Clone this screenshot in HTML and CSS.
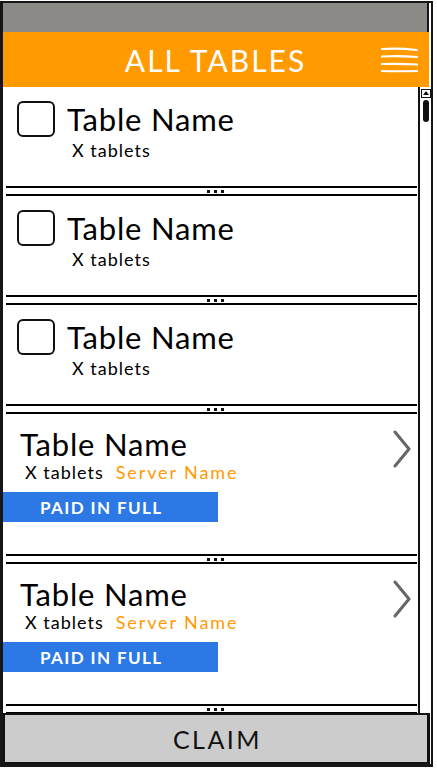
FILE: index.html
```html
<!DOCTYPE html>
<html lang="en">
<head>
    <meta charset="UTF-8">
    <meta name="viewport" content="width=device-width, initial-scale=1.0">
    <title>All Tables</title>
    <link rel="stylesheet" href="styles.css">
</head>
<body>
    <div class="phone">
        <div class="status-bar"></div>
        <div class="app-bar">
            <span></span>
            <h1 class="app-title">ALL TABLES</h1>
            <svg class="menu-icon" width="37" height="26" viewBox="0 0 37 26">
                <path d="M1 2 Q18 1 36 3" />
                <path d="M1 9.5 Q18 8.5 36 10" />
                <path d="M1 17 Q18 16.5 36 17.5" />
                <path d="M1 24 Q18 24.5 36 24" />
            </svg>
        </div>
        <div class="content">
            <div class="table-list">
                <div class="row">
                    <div class="checkbox"></div>
                    <div class="row-text">
                        <div class="table-name">Table Name</div>
                        <div class="meta"><span class="tablets">X tablets</span></div>
                    </div>
                </div>
                <div class="divider"><i></i><i></i><i></i></div>
                <div class="row">
                    <div class="checkbox"></div>
                    <div class="row-text">
                        <div class="table-name">Table Name</div>
                        <div class="meta"><span class="tablets">X tablets</span></div>
                    </div>
                </div>
                <div class="divider"><i></i><i></i><i></i></div>
                <div class="row">
                    <div class="checkbox"></div>
                    <div class="row-text">
                        <div class="table-name">Table Name</div>
                        <div class="meta"><span class="tablets">X tablets</span></div>
                    </div>
                </div>
                <div class="divider"><i></i><i></i><i></i></div>
                <div class="row row-paid">
                    <div class="row-main">
                        <div class="row-text">
                            <div class="table-name">Table Name</div>
                            <div class="meta"><span class="tablets">X tablets</span><span class="server">Server Name</span></div>
                        </div>
                        <svg class="chevron" width="20" height="38" viewBox="0 0 20 38">
                            <path d="M3 2 L17 19 L3 36" />
                        </svg>
                    </div>
                    <div class="paid-badge">PAID IN FULL</div>
                </div>
                <div class="divider"><i></i><i></i><i></i></div>
                <div class="row row-paid">
                    <div class="row-main">
                        <div class="row-text">
                            <div class="table-name">Table Name</div>
                            <div class="meta"><span class="tablets">X tablets</span><span class="server">Server Name</span></div>
                        </div>
                        <svg class="chevron" width="20" height="38" viewBox="0 0 20 38">
                            <path d="M3 2 L17 19 L3 36" />
                        </svg>
                    </div>
                    <div class="paid-badge">PAID IN FULL</div>
                </div>
                <div class="divider"><i></i><i></i><i></i></div>
            </div>
            <div class="scrollbar">
                <div class="scroll-up"></div>
                <div class="scroll-thumb"></div>
            </div>
        </div>
        <button class="claim-btn">CLAIM</button>
    </div>
</body>
</html>
```

FILE: styles.css
```css
body {
    margin: 0;
    background-color: #fff;
    font-family: Lato, "Open Sans", sans-serif;
}
.phone {
    margin-top: 1px;
    width: 433px;
    height: 766px;
    box-sizing: border-box;
    border: 3px solid #161616;
    border-top-width: 2px;
    border-right-width: 2px;
    display: flex;
    flex-direction: column;
    overflow: hidden;
}
.status-bar {
    height: 29px;
    flex: none;
    background-color: #8b8a87;
    margin-right: 2px;
    border-right: 2px solid #161616;
}
.app-bar {
    height: 55px;
    flex: none;
    margin: 0 0 0 -3px;
    background-color: #ff9a00;
    display: grid;
    grid-template-columns: 1fr auto 1fr;
    align-items: center;
    border-right: 2px solid #fff;
}
.app-title {
    margin: 0;
    color: #fff;
    font-size: 30px;
    font-weight: normal;
    letter-spacing: 2px;
    padding-left: 2px;
}
.menu-icon {
    justify-self: end;
    margin-right: 11px;
}
.menu-icon path {
    fill: none;
    stroke: #fff;
    stroke-width: 2.2;
    stroke-linecap: round;
}
.content {
    flex: 1;
    display: flex;
    min-height: 0;
}
.table-list {
    flex: 1;
    overflow: hidden;
}
.row {
    height: 99px;
    display: flex;
    align-items: flex-start;
    box-sizing: border-box;
    padding: 14px 0 0 14px;
}
.checkbox {
    width: 38px;
    height: 36px;
    box-sizing: border-box;
    border: 2px solid #111;
    border-radius: 6px;
    flex: none;
}
.row-text {
    margin-left: 12px;
}
.table-name {
    font-size: 31px;
    line-height: 30px;
    margin-top: 3px;
    color: #000;
    letter-spacing: 0.8px;
}
.meta {
    margin-top: 6px;
    padding-left: 5px;
    font-size: 18px;
    line-height: 20px;
    color: #000;
    letter-spacing: 1px;
}
.server {
    color: #ff9a00;
    margin-left: 12px;
    letter-spacing: 1.9px;
}
.row-paid {
    height: 140px;
    flex-direction: column;
    padding: 15px 0 0 0;
}
.row-main {
    display: flex;
    justify-content: space-between;
    align-self: stretch;
}
.row-paid .row-text {
    margin-left: 17px;
}
.row-paid .table-name {
    margin-top: 0;
}
.row-paid .meta {
    margin-top: 3px;
}
.chevron {
    margin: 1px 6px 0 0;
}
.chevron path {
    fill: none;
    stroke: #666;
    stroke-width: 3;
    stroke-linecap: round;
    stroke-linejoin: round;
}
.paid-badge {
    margin: 10px 0 0 -1px;
    width: 216px;
    height: 30px;
    box-sizing: border-box;
    padding-left: 38px;
    background-color: #2c78e4;
    color: #fff;
    font-size: 17px;
    font-weight: bold;
    line-height: 31px;
    letter-spacing: 1.4px;
}
.divider {
    height: 10px;
    margin: 0 1px 0 3px;
    box-sizing: border-box;
    border-top: 2px solid #000;
    border-bottom: 2px solid #000;
    display: flex;
    justify-content: center;
    align-items: center;
    gap: 4px;
    padding-left: 8px;
}
.divider i {
    width: 3px;
    height: 3px;
    background-color: #111;
}
.scrollbar {
    width: 10px;
    flex: none;
    border-left: 2px solid #111;
    padding: 2px 0 0 1px;
    display: flex;
    flex-direction: column;
    gap: 2px;
}
.scroll-up {
    width: 10px;
    height: 9px;
    box-sizing: border-box;
    border: 1.5px solid #111;
    position: relative;
}
.scroll-up::after {
    content: '';
    position: absolute;
    left: 1px;
    top: 1px;
    border-left: 3px solid transparent;
    border-right: 3px solid transparent;
    border-bottom: 4px solid #111;
}
.scroll-thumb {
    width: 6px;
    height: 22px;
    margin-left: 2px;
    border-radius: 3px;
    background-color: #111;
}
.claim-btn {
    flex: none;
    height: 52px;
    margin: 0 1px -1px -1px;
    border: 3px solid #111;
    border-top-width: 2px;
    background-color: #cccccc;
    color: #111;
    font-family: Lato, "Open Sans", sans-serif;
    font-size: 25px;
    letter-spacing: 2.5px;
    padding: 0 0 0 3px;
}
```
